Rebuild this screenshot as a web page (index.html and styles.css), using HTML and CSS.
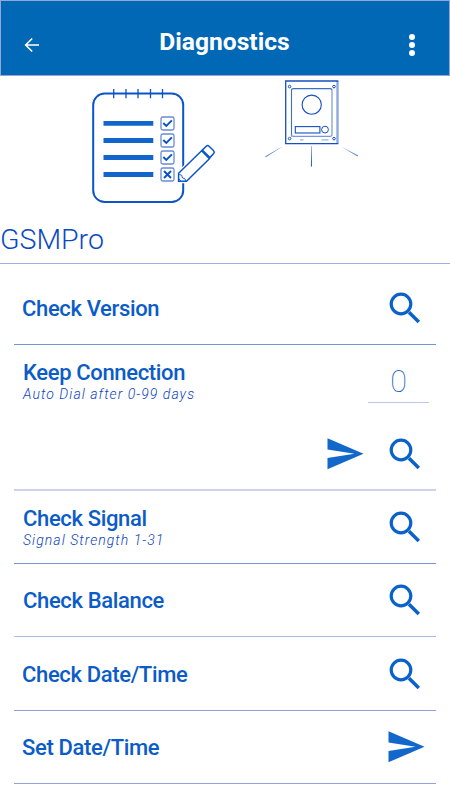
FILE: index.html
```html
<!DOCTYPE html>
<html lang="en">
<head>
<meta charset="utf-8">
<title>Diagnostics</title>
<link rel="stylesheet" href="styles.css">
</head>
<body>
<svg class="defs" aria-hidden="true">
  <symbol id="search" viewBox="0 0 32 32">
    <circle cx="12" cy="12" r="9.8" fill="none" stroke="#0b61ca" stroke-width="3.2"/>
    <path d="M20 20.2 29.8 30" fill="none" stroke="#0b61ca" stroke-width="3.5"/>
  </symbol>
  <symbol id="send" viewBox="0 0 36 32">
    <path d="M0 0.3 36 15.7 0 31.3V20L27 15.8 0 11.6z" fill="#1267cb"/>
  </symbol>
</svg>
<header class="bar">
  <svg class="back" viewBox="0 0 16 16"><path d="M15 8H2M8.2 1.5 1.7 8l6.5 6.5" fill="none" stroke="#fff" stroke-width="1.6"/></svg>
  <h1>Diagnostics</h1>
  <svg class="more" viewBox="0 0 8 24" fill="#fff"><circle cx="4" cy="4" r="3"/><circle cx="4" cy="12" r="3"/><circle cx="4" cy="20" r="3"/></svg>
</header>
<section class="hero">
  <svg class="checklist" viewBox="80 80 150 130" fill="none" stroke="#0b55c6">
    <rect x="93.2" y="93.5" width="90" height="108.5" rx="11.5" stroke-width="2"/>
    <path d="M113.7 89v9.3M126 89v9.3M138 89v9.3M150.500 89v9.3M162.500 89v9.300" stroke-width="1.300"/>
    <path d="M103.500 123.400H153.300M103.500 140.500H153.300M103.500 157.500H153.300M103.500 174.500H153.300" stroke="#1266cb" stroke-width="4.800"/>
    <g stroke="#6a8bd5" stroke-width="1.300">
      <rect x="161" y="117" width="13" height="13" rx="1.800"/><rect x="161" y="134" width="13" height="13" rx="1.800"/><rect x="161" y="151" width="13" height="13" rx="1.800"/><rect x="161" y="168" width="13" height="13" rx="1.800"/>
    </g>
    <path d="M163.300 123l3 3 5.600-5.600M163.300 140l3 3 5.600-5.600M163.300 157l3 3 5.600-5.600M164 171l7 7M171 171l-7 7" stroke="#0753c4" stroke-width="1.900"/>
    <path d="M177.500 183V172L184 166V180z" fill="#fff" stroke="none"/>
    <path d="M178.600 181.300V173.300L203.500 149 211.500 157 187 181.300z" fill="#fff" stroke="#fff" stroke-width="4"/>
    <path d="M178.600 181.300V173.300L201.600 150.800 209.400 158.700 186.500 181.300z" stroke-width="1.500"/>
    <path d="M202.300 150.100 206.200 146.200Q207.700 144.900 209.100 146.200L213.600 150.700Q215 152.100 213.700 153.500L210 157.600z" fill="#fff" stroke-width="1.500"/>
    <path d="M179.200 174.500 181.700 175.200 182.500 178 185 178.800 185.800 181M181 181.300 178.700 178.500" stroke-width=".9"/>
  </svg>
  <svg class="panel" viewBox="255 75 115 100" fill="none" stroke="#164fc2">
    <path d="M337.500 81V143.500" stroke="#8ea9de" stroke-width="2.400"/>
    <path d="M338.300 143.700H285.700V81H338.300" stroke-width="1.300"/>
    <path d="M291.500 136.500V90.500Q291.500 88.600 293.500 88.600H330Q332 88.600 332 90.500" stroke="#3b6fcb" stroke-width="1.100"/>
    <path d="M332 90.500V134.500Q332 136.300 330 136.300H293.500Q291.500 136.300 291.500 134.500" stroke="#7698da" stroke-width="1.200"/>
    <circle cx="311.700" cy="104.700" r="9.600" stroke-width="1.100"/>
    <rect x="295.300" y="126.600" width="24.600" height="6.400" stroke-width="1.100"/>
    <circle cx="325" cy="129.600" r="3.400" stroke-width="1"/>
    <g stroke-width="1"><circle cx="289.600" cy="86.600" r="1.300"/><circle cx="334" cy="86.600" r="1.300"/><circle cx="289.600" cy="138.600" r="1.300"/><circle cx="334" cy="138.600" r="1.300"/></g>
    <path d="M300 139.800H303.500M321.500 139.800H328.500" stroke="#9cb3e5" stroke-width="1.200"/>
    <path d="M265 156.400 277 149.500 283 146.300 265.800 157.300zM357.500 156.600 346 149.500 340.500 146.300 358.200 155.600z" fill="#5c84d1" stroke="none"/>
    <path d="M310.900 166.500 311.300 146H311.700L312 166.500z" fill="#2860c5" stroke="none"/>
  </svg>
</section>
<h2>GSMPro</h2>
<main>
  <div class="row first"><span class="label">Check Version</span><svg class="search"><use href="#search"/></svg></div>
  <div class="row keep">
    <div class="top">
      <div class="text"><span class="label w2">Keep Connection</span><span class="note">Auto Dial after 0-99 days</span></div>
      <div class="field">0</div>
    </div>
    <div class="actions"><svg class="send"><use href="#send"/></svg><svg class="search"><use href="#search"/></svg></div>
  </div>
  <div class="row signal"><div class="text"><span class="label w2">Check Signal</span><span class="note">Signal Strength 1-31</span></div><svg class="search"><use href="#search"/></svg></div>
  <div class="row balance"><span class="label w2">Check Balance</span><svg class="search"><use href="#search"/></svg></div>
  <div class="row date"><span class="label">Check Date/Time</span><svg class="search"><use href="#search"/></svg></div>
  <div class="row set"><span class="label">Set Date/Time</span><svg class="send"><use href="#send"/></svg></div>
</main>
</body>
</html>
```

FILE: styles.css
```css
* { box-sizing: border-box; }
body { margin: 0; width: 450px; height: 800px; overflow: hidden; background: #fff; color: #0b5cc8; font-family: Roboto, "Noto Sans", sans-serif; }
svg { display: block; flex: none; }
.defs { display: none; }
.bar { height: 76px; background: #0068b4; border: 1px solid #93a7d4; display: flex; justify-content: space-between; align-items: flex-start; padding: 0 33px 0 23px; color: #fff; }
.back { width: 16px; height: 16px; margin-top: 36px; }
.bar h1 { margin: 25px 0 0 1px; font-size: 24.6px; line-height: 32px; font-weight: 700; }
.more { width: 8px; height: 24px; margin-top: 32px; }
.hero { height: 139px; display: flex; padding-left: 80px; gap: 25px; }
.checklist { width: 150px; height: 130px; margin-top: 4px; }
.panel { width: 115px; height: 100px; margin-top: -1px; }
h2 { margin: 0; height: 49px; padding-top: 7px; font-size: 28.5px; line-height: 36px; font-weight: 300; color: #0b49c3; border-bottom: 1px solid #a3acdb; }
main { padding: 0 14px; }
.row { display: flex; justify-content: space-between; align-items: center; padding: 0 15px 0 8px; border-bottom: 1px solid #92a2dc; }
.first { height: 81px; padding-top: 7px; border-color: #7495d9; }
.label { display: block; font-size: 22px; line-height: 26px; font-weight: 500; letter-spacing: -0.35px; white-space: nowrap; }
.row > .label { padding-top: 2px; }
.w2 { margin-left: 1px; }
.search { width: 32px; height: 32px; }
.send { width: 37px; height: 32px; }
.keep { display: block; height: 146px; border-bottom: 2px solid #ccd3ec; }
.top { display: flex; justify-content: space-between; height: 93px; padding-top: 15px; margin-right: -8px; }
.note { display: block; margin: -1px 0 0 1px; font-size: 14px; line-height: 18px; font-style: italic; font-weight: 300; letter-spacing: 1.05px; white-space: nowrap; color: #0a43bd; }
.field { width: 61px; height: 43px; border-bottom: 1px solid #bac7ea; text-align: center; font-size: 30.5px; line-height: 43px; font-weight: 100; }
.actions { display: flex; justify-content: flex-end; gap: 25px; }
.signal { height: 73px; border-color: #7594d9; }
.balance { height: 73px; border-color: #aab9e5; }
.date { height: 74px; }
.set { height: 73px; padding-right: 11px; }
```
